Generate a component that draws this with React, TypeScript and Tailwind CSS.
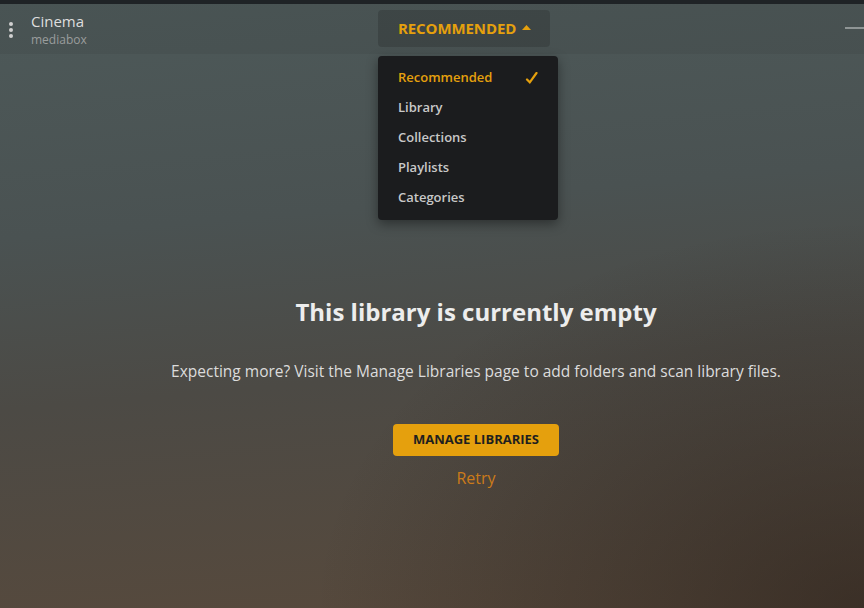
import type React from "react"

const menuItems = ["Recommended", "Library", "Collections", "Playlists", "Categories"]

const App: React.FC = () => {
  return (
    <div
      className="relative w-[864px] h-[608px] overflow-hidden bg-[linear-gradient(175deg,#4d5959_0%,#4a5252_35%,#4c4a45_60%,#58493b_100%)] font-['Open_Sans',sans-serif]"
    >
      {/* darker corner at bottom right */}
      <div className="pointer-events-none absolute inset-0 bg-[radial-gradient(ellipse_at_100%_100%,rgba(30,22,18,0.5)_0%,rgba(30,22,18,0)_45%)]" />

      <div className="relative flex flex-col h-full">
        <div className="h-[4px] bg-[#1f2326]" />

        {/* header */}
        <div className="relative flex items-center h-[50px] bg-black/5">
          <div className="flex items-center w-[378px] shrink-0">
            <div className="flex flex-col items-center gap-[2px] w-[22px] mt-[2px]">
              <span className="w-[4px] h-[4px] rounded-full bg-[#d0d0d0]" />
              <span className="w-[4px] h-[4px] rounded-full bg-[#d0d0d0]" />
              <span className="w-[4px] h-[4px] rounded-full bg-[#d0d0d0]" />
            </div>
            <div className="ml-[9px] flex flex-col leading-none mt-[2px]">
              <span className="text-[15px] text-[#dedede]">Cinema</span>
              <span className="mt-[5px] text-[12px] text-[#9a9d9d]">mediabox</span>
            </div>
          </div>

          <div className="relative">
            <button className="flex items-center gap-[6px] h-[37px] w-[172px] pl-[20px] rounded-[4px] bg-black/15 text-[15px] font-bold text-[#e5a00d] tracking-[-0.1px] -mt-[2px]">
              RECOMMENDED
              <svg width="9" height="5" viewBox="0 0 9 5" className="mt-[-1px]">
                <path d="M0 5 L4.5 0 L9 5 Z" fill="#e5a00d" />
              </svg>
            </button>

            {/* dropdown menu */}
            <div className="absolute left-0 top-[44px] w-[180px] rounded-[4px] bg-[#1b1c1e] py-[7px] shadow-[0_4px_12px_rgba(0,0,0,0.4)] z-10">
              {menuItems.map((item, i) => (
                <div
                  key={item}
                  className={`flex items-center justify-between h-[30px] pl-[20px] pr-[20px] text-[13px] font-semibold ${
                    i === 0 ? "text-[#e5a00d]" : "text-[#c8c8c8]"
                  }`}
                >
                  <span>{item}</span>
                  {i === 0 && (
                    <svg width="13" height="12" viewBox="0 0 13 12">
                      <path d="M2 7.5 L4.8 10.3 L11.5 1" stroke="#e5a00d" strokeWidth="2.2" strokeLinecap="round" fill="none" />
                    </svg>
                  )}
                </div>
              ))}
            </div>
          </div>

          <div className="ml-auto w-[19px] h-[2px] bg-[#8f9595] mt-[-2px]" />
        </div>

        {/* empty state */}
        <div className="flex flex-col items-center pl-[88px] pt-[243px]">
          <h1 className="text-[24px] font-bold text-[#ededed] leading-[30px]">This library is currently empty</h1>
          <p className="mt-[34px] text-[15.5px] text-[#dcdcdc] leading-[20px]">
            Expecting more? Visit the Manage Libraries page to add folders and scan library files.
          </p>
          <button className="mt-[43px] h-[32px] w-[166px] rounded-[4px] bg-[#e5a00d] text-[13px] font-bold text-[#1f1f1f]">
            MANAGE LIBRARIES
          </button>
          <span className="mt-[10px] text-[16px] text-[#cc7b19]">Retry</span>
        </div>
      </div>
    </div>
  )
}

export default App
